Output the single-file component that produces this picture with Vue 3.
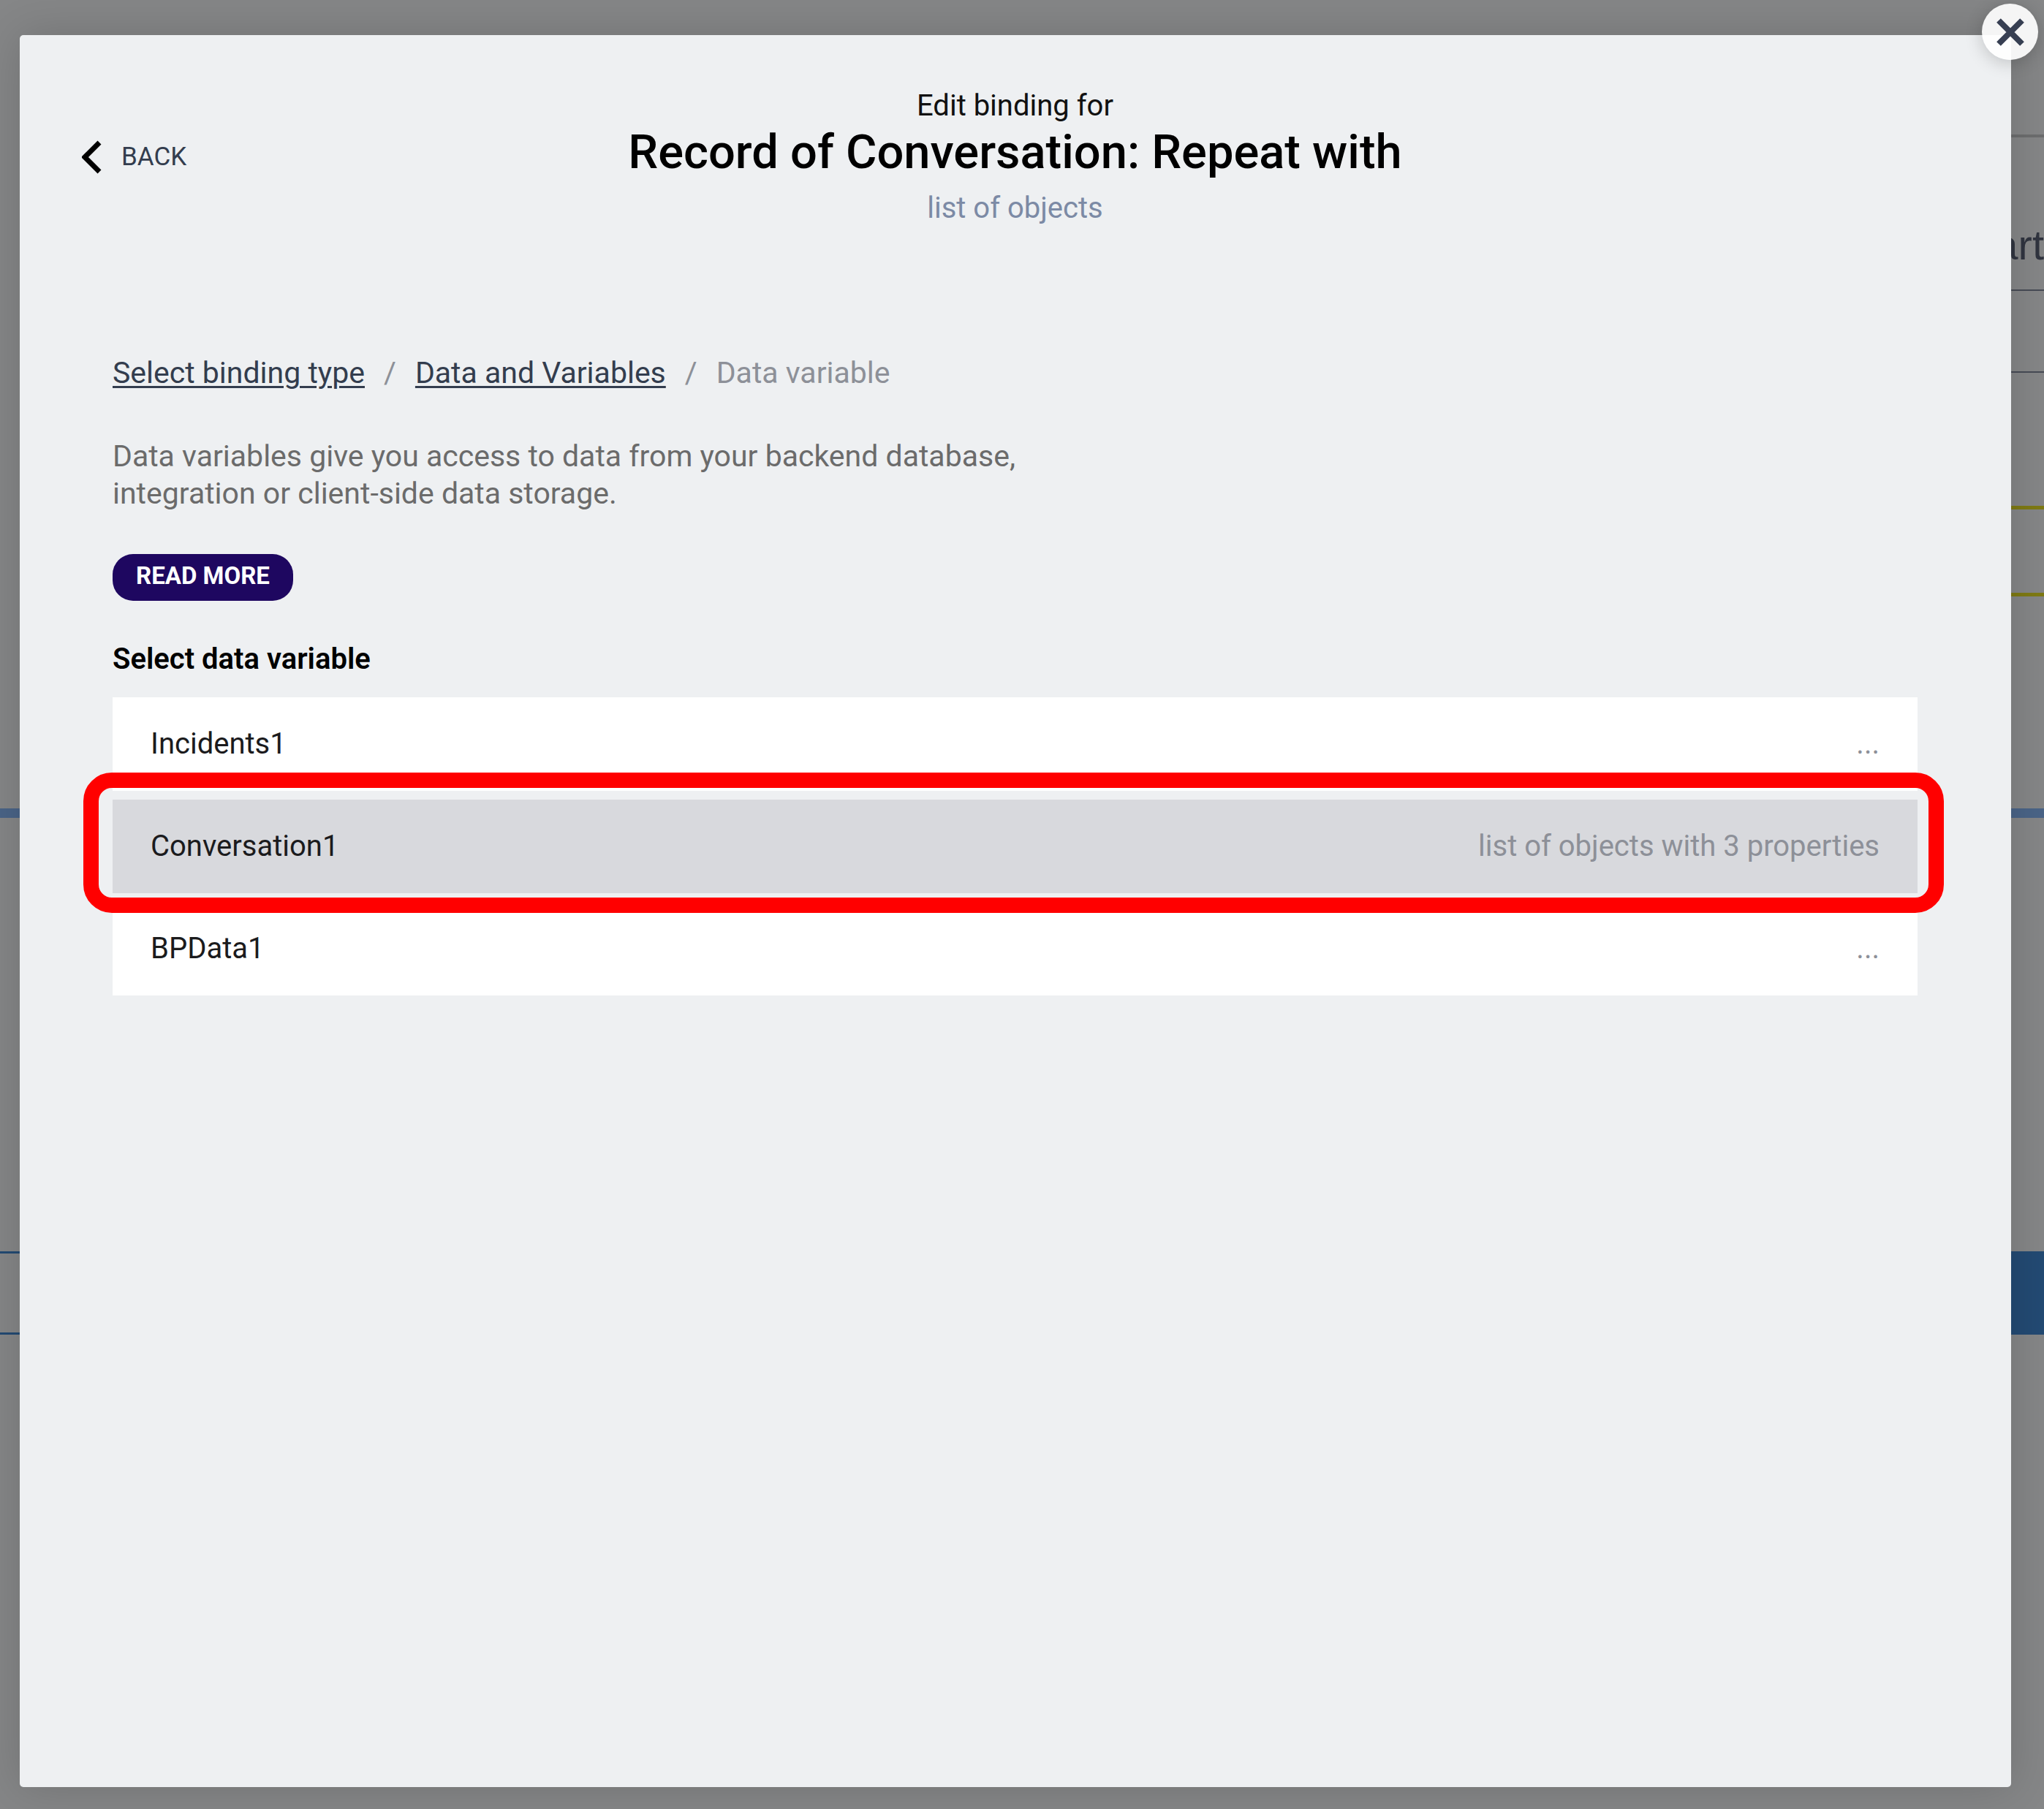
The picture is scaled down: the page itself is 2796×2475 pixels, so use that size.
<script setup>
import { ref } from 'vue'

const crumbs = ['Select binding type', 'Data and Variables']
const variables = [
  { name: 'Incidents1', type: '...' },
  { name: 'Conversation1', type: 'list of objects with 3 properties' },
  { name: 'BPData1', type: '...' },
]
const selected = ref('Conversation1')
</script>

<template>
  <div class="screen">
    <div class="canvas">
      <div class="bar"></div>
      <div class="title-line">art</div>
      <div class="field"></div>
      <div class="notice"></div>
      <div class="divider"></div>
      <div class="actions">
        <span class="outlined"></span>
        <span class="filled"></span>
      </div>
    </div>

    <section class="dialog" role="dialog" aria-labelledby="dialog-title">
      <button class="close" type="button" aria-label="Close">
        <svg viewBox="0 0 40 40" width="40" height="40">
          <path d="M4 4 36 36M36 4 4 36" stroke="#373f52" stroke-width="8" fill="none" />
        </svg>
      </button>

      <header class="header">
        <button class="back" type="button">
          <svg viewBox="0 0 27 46" width="27" height="46">
            <path d="M24 3 4 23 24 43" stroke="#000" stroke-width="7" fill="none" />
          </svg>
          <span>BACK</span>
        </button>
        <div class="heading">
          <p class="eyebrow">Edit binding for</p>
          <h1 id="dialog-title">Record of Conversation: Repeat with</h1>
          <p class="kind">list of objects</p>
        </div>
      </header>

      <main class="content">
        <nav class="crumbs">
          <template v-for="crumb in crumbs" :key="crumb">
            <a href="#">{{ crumb }}</a>
            <span>/</span>
          </template>
          <span>Data variable</span>
        </nav>
        <p class="intro">
          Data variables give you access to data from your backend database,<br />
          integration or client-side data storage.
        </p>
        <button class="more" type="button">READ MORE</button>
        <h2>Select data variable</h2>
        <ul class="list">
          <li v-for="item in variables" :key="item.name" :class="{ marked: item.name === selected }">
            <button class="row" type="button" @click="selected = item.name">
              <span>{{ item.name }}</span>
              <span class="type">{{ item.type }}</span>
            </button>
          </li>
        </ul>
      </main>
    </section>
  </div>
</template>

<style>
body {
  margin: 0;
  background: #858687;
}
</style>

<style scoped>
.screen {
  position: relative;
  display: flex;
  min-height: 100vh;
  box-sizing: border-box;
  padding: 48px 45px 30px 27px;
  overflow: hidden;
  font-family: Roboto, "Liberation Sans", sans-serif;
  font-size: 40px;
  font-weight: 400;
  line-height: 52px;
}

button {
  margin: 0;
  padding: 0;
  border: 0;
  background: none;
  font: inherit;
  color: inherit;
  cursor: pointer;
}

p,
h1,
h2,
ul {
  margin: 0;
  padding: 0;
}

/* Page behind the dialog */
.canvas {
  position: absolute;
  inset: 0;
  display: flex;
  flex-direction: column;
}

.bar,
.title-line,
.field,
.notice {
  margin-left: 50%;
}

.bar {
  height: 184px;
  border-bottom: 4px solid #6c6d6e;
}

.title-line {
  height: 208px;
  font: 58px/294px "Liberation Sans", sans-serif;
  text-align: right;
  color: #30343f;
}

.field {
  height: 110px;
  border: solid #474b55;
  border-width: 2px 0;
}

.notice {
  height: 114px;
  margin-top: 182px;
  border: solid #7e7a14;
  border-width: 5px 0;
}

.divider {
  height: 13px;
  margin-top: 290px;
  background: #4a6487;
}

.actions {
  display: flex;
  height: 114px;
  margin-top: 593px;
}

.outlined {
  flex: 1;
  border: solid #234a73;
  border-width: 3px 0;
}

.filled {
  flex: 1;
  background: #234a73;
}

/* Dialog */
.dialog {
  position: relative;
  flex: 1;
  box-sizing: border-box;
  padding: 71px 128px 69px 127px;
  border-radius: 5px;
  background: #eef0f2;
  box-shadow: 0 0 60px rgba(0, 0, 0, 0.16);
}

.close {
  position: absolute;
  top: -43px;
  right: -37px;
  display: grid;
  place-items: center;
  width: 77px;
  height: 77px;
  border-radius: 50%;
  background: rgba(255, 255, 255, 0.92);
  box-shadow: 0 4px 24px rgba(0, 0, 0, 0.2);
}

.header {
  display: grid;
  grid-template-columns: 1fr auto 1fr;
  align-items: center;
}

.back {
  display: flex;
  align-items: center;
  gap: 27px;
  margin-left: -42px;
  font-size: 35px;
  color: #333d4e;
}

.heading {
  text-align: center;
}

.eyebrow {
  color: #111;
}

h1 {
  font-size: 65px;
  font-weight: 500;
  line-height: 74px;
  color: #000;
}

.kind {
  margin-top: 14px;
  color: #7c8aa5;
}

.content {
  margin-top: 173px;
}

.crumbs {
  display: flex;
  gap: 26px;
  font-size: 41px;
  color: #8d9098;
}

.crumbs a {
  color: #333d4e;
  text-decoration-thickness: 3px;
  text-underline-offset: 4px;
}

.intro {
  margin-top: 63px;
  font-size: 41px;
  line-height: 51px;
  color: #6b6b6b;
}

.more {
  display: block;
  height: 64px;
  margin-top: 57px;
  padding: 0 32px 4px;
  border-radius: 28px;
  background: #1e0760;
  font-size: 33px;
  font-weight: 700;
  line-height: 60px;
  color: #fff;
}

h2 {
  margin-top: 54px;
  font-size: 40px;
  font-weight: 600;
  color: #000;
}

.list {
  display: flex;
  flex-direction: column;
  gap: 12px;
  margin-top: 26px;
  list-style: none;
}

.list li {
  position: relative;
  background: #fff;
}

.row {
  display: flex;
  justify-content: space-between;
  align-items: center;
  width: 100%;
  height: 128px;
  padding: 0 52px;
  color: #1b1b1d;
}

.type {
  color: #8d9098;
}

.list .marked {
  z-index: 1;
  background: #d8d9dd;
}

.marked::after {
  content: "";
  position: absolute;
  inset: -37px -36px -27px -40px;
  border: 21px solid #f00;
  border-radius: 39px;
  pointer-events: none;
}
</style>
